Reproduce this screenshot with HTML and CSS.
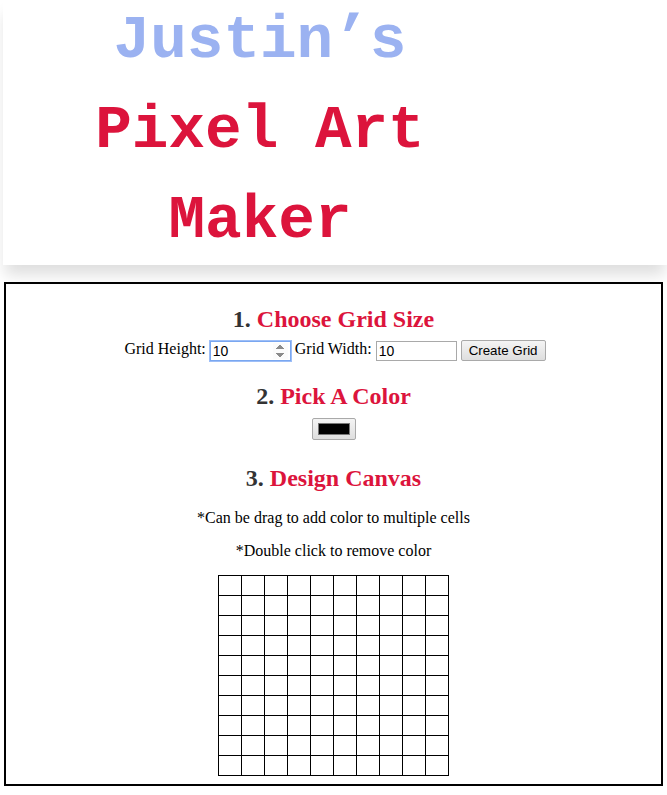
FILE: index.html
```html
<!DOCTYPE html>
<html lang="en">
<head>
<meta charset="utf-8">
<title>Pixel Art Maker</title>
<link rel="stylesheet" href="styles.css">
</head>
<body>
<header class="banner">
  <h1 class="title"><span class="title-name">Justin’s</span> Pixel Art Maker</h1>
</header>
<main class="panel">
  <h2 class="step"><span class="step-num">1.</span> Choose Grid Size</h2>
  <form class="size-form">
    Grid Height: <input class="num-input" type="number" value="10" autofocus>
    Grid Width: <input class="num-input" type="text" value="10">
    <input class="submit-btn" type="button" value="Create Grid">
  </form>
  <h2 class="step"><span class="step-num">2.</span> Pick A Color</h2>
  <div class="color-row"><button class="color-btn" type="button"><span class="swatch"></span></button></div>
  <h2 class="step"><span class="step-num">3.</span> Design Canvas</h2>
  <p class="note">*Can be drag to add color to multiple cells</p>
  <p class="note">*Double click to remove color</p>
  <table class="canvas">
    <tbody>
      <tr><td></td><td></td><td></td><td></td><td></td><td></td><td></td><td></td><td></td><td></td></tr>
      <tr><td></td><td></td><td></td><td></td><td></td><td></td><td></td><td></td><td></td><td></td></tr>
      <tr><td></td><td></td><td></td><td></td><td></td><td></td><td></td><td></td><td></td><td></td></tr>
      <tr><td></td><td></td><td></td><td></td><td></td><td></td><td></td><td></td><td></td><td></td></tr>
      <tr><td></td><td></td><td></td><td></td><td></td><td></td><td></td><td></td><td></td><td></td></tr>
      <tr><td></td><td></td><td></td><td></td><td></td><td></td><td></td><td></td><td></td><td></td></tr>
      <tr><td></td><td></td><td></td><td></td><td></td><td></td><td></td><td></td><td></td><td></td></tr>
      <tr><td></td><td></td><td></td><td></td><td></td><td></td><td></td><td></td><td></td><td></td></tr>
      <tr><td></td><td></td><td></td><td></td><td></td><td></td><td></td><td></td><td></td><td></td></tr>
      <tr><td></td><td></td><td></td><td></td><td></td><td></td><td></td><td></td><td></td><td></td></tr>
    </tbody>
  </table>
</main>
</body>
</html>
```
FILE: styles.css
```css
html, body {
  margin: 0;
  padding: 0;
  background: #fff;
}
body {
  font-family: "Liberation Serif", "Times New Roman", serif;
  font-size: 16px;
  color: #000;
  overflow: hidden;
}
.banner {
  margin-left: 3px;
  width: calc(100% - 3px);
  height: 265px;
  overflow: hidden;
  background: #fff;
  box-shadow: 0 12px 14px -2px rgba(0, 0, 0, 0.13);
}
.title {
  margin: -4px 0 0 37px;
  width: 440px;
  text-align: center;
  font-family: "Liberation Mono", "Courier New", monospace;
  font-weight: bold;
  font-size: 61px;
  line-height: 90px;
  color: #dc143c;
}
.title-name {
  color: #9bb2f1;
}
.panel {
  margin: 17px 4px 0;
  border: 2px solid #000;
  height: 500px;
  text-align: center;
}
.step {
  font-size: 24px;
  font-weight: bold;
  color: #dc143c;
  margin: 20px 0 6px;
  line-height: 30px;
}
.step-num {
  color: #333;
}
.size-form {
  font-size: 16px;
  padding-left: 3px;
}
.num-input {
  width: 81px;
  height: 20px;
  box-sizing: border-box;
  font-family: "Liberation Sans", Arial, sans-serif;
  font-size: 14px;
  border: 1px solid #a9a9a9;
  padding: 1px 2px;
  vertical-align: middle;
}
.num-input:focus {
  outline: none;
  border: 1px solid #7aa7f0;
  box-shadow: 0 0 0 1px #9dbef7;
}
.submit-btn {
  height: 21px;
  font-family: "Liberation Sans", Arial, sans-serif;
  font-size: 13.33px;
  padding: 1px 7px;
  border: 1px solid #a9a9a9;
  border-radius: 2px;
  background: linear-gradient(#f4f4f4, #dedede);
  vertical-align: middle;
}
.color-row {
  display: flex;
  justify-content: center;
  padding: 1px 0 3px;
}
.color-btn {
  width: 44px;
  height: 22px;
  padding: 4px 5px;
  border: 1px solid #a9a9a9;
  border-radius: 2px;
  background: linear-gradient(#f4f4f4, #dedede);
  display: flex;
  box-sizing: border-box;
}
.swatch {
  flex: 1;
  background: #000;
  border: 1px solid #777;
}
.note {
  margin: 16px 0 15px;
  line-height: 17px;
}
.canvas {
  margin: 16px auto 0;
  border-collapse: collapse;
  border: 1px solid #000;
}
.canvas td {
  width: 22px;
  height: 19px;
  padding: 0;
  border: 1px solid #000;
}
```
